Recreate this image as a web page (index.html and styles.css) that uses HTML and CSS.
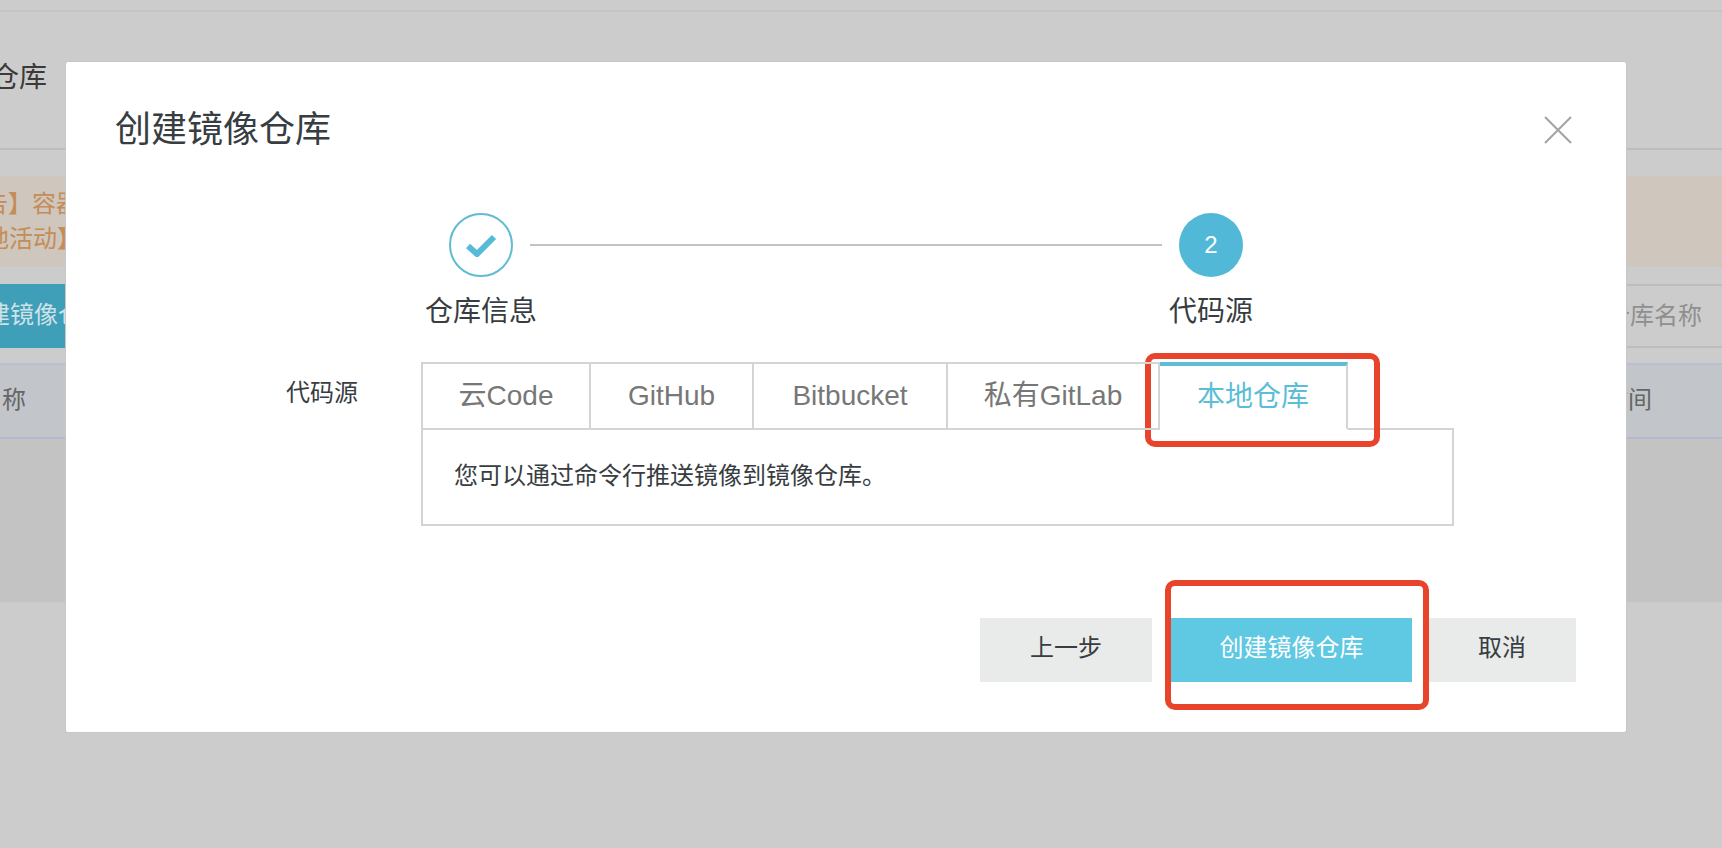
FILE: index.html
```html
<!DOCTYPE html>
<html lang="zh-CN">
<head>
    <meta charset="UTF-8">
    <title>创建镜像仓库</title>
    <link rel="stylesheet" href="styles.css">
</head>
<body>
    <div class="page">
        <div class="topbar"></div>
        <div class="page-head">镜像仓库</div>
        <div class="notice">
            <div>【公告】容器镜像服务升级通知</div>
            <div>【基地活动】容器镜像服务</div>
        </div>
        <div class="toolbar">
            <div class="btn-new">创建镜像仓库</div>
            <div class="search">仓库名称</div>
        </div>
        <div class="table-head">
            <span>仓库名称</span>
            <span>创建时间</span>
        </div>
        <div class="table-body"></div>
    </div>

    <div class="modal">
        <div class="modal-head">
            <h2>创建镜像仓库</h2>
            <svg class="close" viewBox="0 0 28 28" width="28" height="28">
                <path d="M1 1L27 27M27 1L1 27" fill="none" stroke="#a3a3a3" stroke-width="2"/>
            </svg>
        </div>

        <div class="steps">
            <div class="step">
                <div class="step-icon done">
                    <svg viewBox="0 0 32 24" width="32" height="24">
                        <path d="M3 13L12 21L29 4" fill="none" stroke="#56bbd9" stroke-width="6"/>
                    </svg>
                </div>
                <div class="step-name">仓库信息</div>
            </div>
            <div class="step-line"></div>
            <div class="step">
                <div class="step-icon current">2</div>
                <div class="step-name">代码源</div>
            </div>
        </div>

        <div class="form-row">
            <div class="form-label">代码源</div>
            <div class="form-field">
                <div class="tabs">
                    <div class="tab">云Code</div>
                    <div class="tab">GitHub</div>
                    <div class="tab">Bitbucket</div>
                    <div class="tab">私有GitLab</div>
                    <div class="tab active">本地仓库</div>
                </div>
                <div class="tab-panel">您可以通过命令行推送镜像到镜像仓库。</div>
            </div>
        </div>

        <div class="modal-foot">
            <div class="btn btn-prev">上一步</div>
            <div class="btn btn-primary">创建镜像仓库</div>
            <div class="btn btn-cancel">取消</div>
        </div>
    </div>

    <!-- red annotation boxes drawn on the screenshot -->
    <div class="mark mark-tab"></div>
    <div class="mark mark-btn"></div>
</body>
</html>
```

FILE: styles.css
```css
* {
    box-sizing: border-box;
    margin: 0;
    padding: 0;
}

html, body {
    width: 1722px;
    height: 848px;
    overflow: hidden;
    background: #cccccc;
    font-family: "Liberation Sans", "Noto Sans CJK SC", sans-serif;
    color: #333;
}

/* page behind the dialog */
.page {
    width: 1722px;
    height: 848px;
    background: #cccccc;
}

.topbar {
    height: 12px;
    border-bottom: 2px solid #c5c5c5;
}

.page-head {
    height: 138px;
    padding-top: 50px;
    margin-left: -65px;
    font-size: 28px;
    line-height: 32px;
    color: #3a3a3a;
    border-bottom: 2px solid #bdbdbd;
}

.notice {
    height: 91px;
    margin-top: 26px;
    padding-top: 10px;
    background: #cfc6bd;
    color: #c48c57;
    font-size: 24px;
    line-height: 35px;
    white-space: nowrap;
}

.notice div:first-child {
    margin-left: -64px;
}

.notice div:last-child {
    margin-left: -63px;
}

.toolbar {
    display: flex;
    justify-content: space-between;
    align-items: center;
    height: 64px;
    margin-top: 17px;
}

.btn-new {
    width: 66px;
    height: 64px;
    background: #3f9fb8;
    color: #cfe2e7;
    font-size: 24px;
    line-height: 62px;
    white-space: nowrap;
    text-indent: -38px;
    overflow: hidden;
}

.search {
    width: 200px;
    height: 64px;
    padding-right: 20px;
    text-align: right;
    border-top: 2px solid #bdbdbd;
    border-bottom: 2px solid #bdbdbd;
    color: #8f8f8f;
    font-size: 24px;
    line-height: 60px;
}

.table-head {
    display: flex;
    justify-content: space-between;
    height: 76px;
    margin-top: 15px;
    padding-right: 70px;
    background: #c2c5c9;
    border-top: 2px solid #b9bfcc;
    border-bottom: 2px solid #b4b9d0;
    color: #666;
    font-size: 24px;
    line-height: 70px;
}

.table-head span:first-child {
    margin-left: -70px;
}

.table-body {
    height: 163px;
    background: #c3c3c3;
}

/* dialog */
.modal {
    position: absolute;
    left: 66px;
    top: 62px;
    width: 1560px;
    height: 670px;
    background: #fff;
    border-radius: 2px;
    box-shadow: 0 0 0 1px #c7c7c7;
}

.modal-head {
    display: flex;
    justify-content: space-between;
    align-items: flex-start;
    height: 130px;
    padding: 46px 54px 0 49px;
}

.modal-head h2 {
    font-size: 36px;
    font-weight: 400;
    line-height: 44px;
    color: #373d41;
}

.close {
    margin-top: 8px;
}

.steps {
    display: flex;
    align-items: flex-start;
    width: 794px;
    margin-top: 21px;
    margin-left: 383px;
}

.step {
    display: flex;
    flex-direction: column;
    align-items: center;
    flex-shrink: 0;
    width: 64px;
}

.step-icon {
    display: flex;
    align-items: center;
    justify-content: center;
    flex-shrink: 0;
    width: 64px;
    height: 64px;
    border-radius: 50%;
    font-size: 24px;
}

.step-icon.done {
    border: 2px solid #5fbcd3;
}

.step-icon.current {
    background: #52b8d7;
    color: #fff;
}

.step-name {
    margin-top: 17px;
    font-size: 28px;
    line-height: 36px;
    white-space: nowrap;
    color: #373d41;
}

.step-line {
    flex: 1;
    height: 2px;
    margin: 31px 17px 0;
    background: #c3c3c3;
}

.form-row {
    display: flex;
    margin-top: 32px;
}

.form-label {
    width: 292px;
    padding-top: 15px;
    text-align: right;
    font-size: 24px;
    line-height: 32px;
    color: #373d41;
}

.form-field {
    width: 1033px;
    margin-left: 63px;
}

.tabs {
    position: relative;
    z-index: 1;
    display: grid;
    grid-template-columns: 170px 163px 194px 212px 188px;
    justify-content: start;
    height: 68px;
}

.tab {
    height: 68px;
    border: 2px solid #d4d4d4;
    border-left-width: 0;
    font-size: 28px;
    line-height: 64px;
    text-align: center;
    white-space: nowrap;
    color: #777;
}

.tab:first-child {
    border-left-width: 2px;
}

.tab.active {
    border-top: 4px solid #5bbdd6;
    border-bottom-color: #fff;
    color: #5bbdd6;
    line-height: 62px;
}

.tab-panel {
    height: 98px;
    margin-top: -2px;
    padding: 30px 31px 0;
    border: 2px solid #d4d4d4;
    font-size: 24px;
    line-height: 32px;
    color: #373d41;
}

.modal-foot {
    display: flex;
    margin-top: 92px;
    margin-left: 914px;
}

.btn {
    height: 64px;
    background: #e9ebeb;
    font-size: 24px;
    line-height: 60px;
    text-align: center;
    color: #373d41;
}

.btn-prev {
    width: 172px;
}

.btn-primary {
    width: 241px;
    margin-left: 19px;
    background: #5fc8e2;
    color: #fff;
}

.btn-cancel {
    width: 148px;
    margin-left: 16px;
}

/* annotations */
.mark {
    position: absolute;
    border: 6px solid #e8432b;
    border-radius: 10px;
}

.mark-tab {
    left: 1145px;
    top: 353px;
    width: 235px;
    height: 94px;
}

.mark-btn {
    left: 1165px;
    top: 580px;
    width: 264px;
    height: 130px;
}
```
